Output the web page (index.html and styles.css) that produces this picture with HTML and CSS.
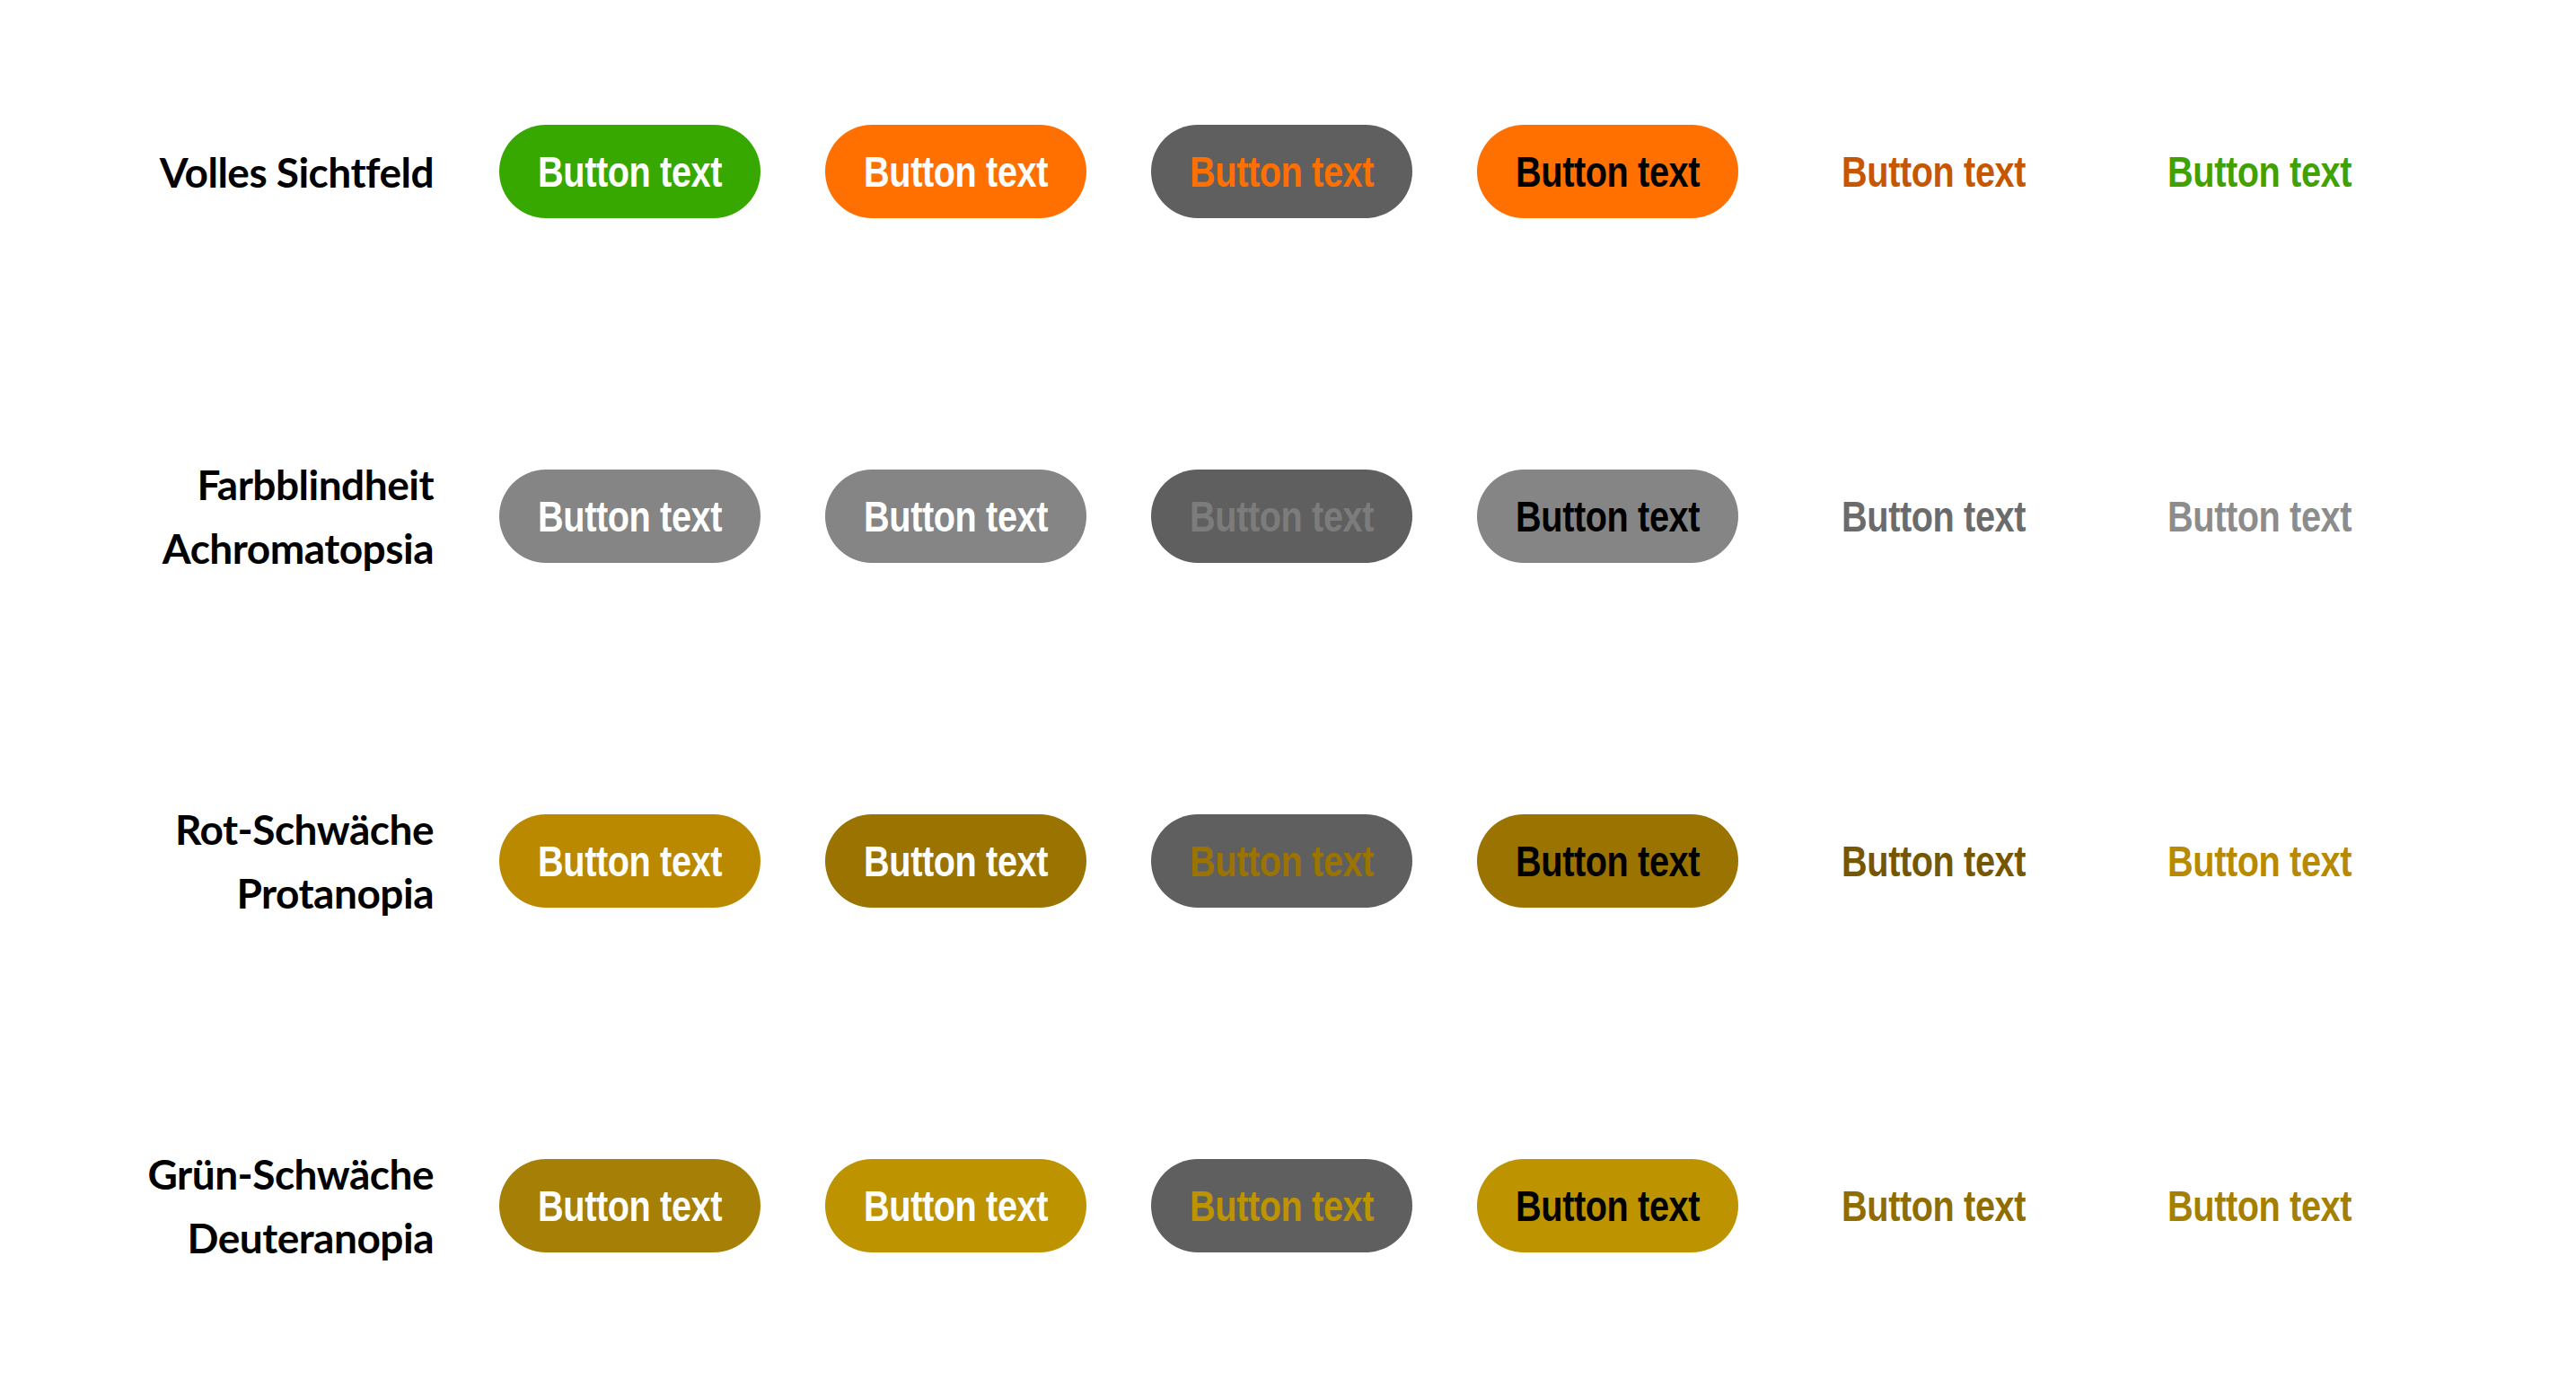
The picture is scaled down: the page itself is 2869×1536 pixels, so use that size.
FILE: index.html
```html
<!DOCTYPE html>
<html lang="de">
<head>
<meta charset="utf-8">
<title>Button Farbsimulation</title>
<link rel="stylesheet" href="styles.css">
</head>
<body>
<main class="board">
  <div class="label">Volles Sichtfeld</div>
  <div class="btn r1-b1"><span class="txt">Button text</span></div>
  <div class="btn r1-b2"><span class="txt">Button text</span></div>
  <div class="btn r1-b3"><span class="txt">Button text</span></div>
  <div class="btn r1-b4"><span class="txt">Button text</span></div>
  <div class="btn plain r1-t5"><span class="txt">Button text</span></div>
  <div class="btn plain r1-t6"><span class="txt">Button text</span></div>

  <div class="label">Farbblindheit<br>Achromatopsia</div>
  <div class="btn r2-b1"><span class="txt">Button text</span></div>
  <div class="btn r2-b2"><span class="txt">Button text</span></div>
  <div class="btn r2-b3"><span class="txt">Button text</span></div>
  <div class="btn r2-b4"><span class="txt">Button text</span></div>
  <div class="btn plain r2-t5"><span class="txt">Button text</span></div>
  <div class="btn plain r2-t6"><span class="txt">Button text</span></div>

  <div class="label">Rot-Schwäche<br>Protanopia</div>
  <div class="btn r3-b1"><span class="txt">Button text</span></div>
  <div class="btn r3-b2"><span class="txt">Button text</span></div>
  <div class="btn r3-b3"><span class="txt">Button text</span></div>
  <div class="btn r3-b4"><span class="txt">Button text</span></div>
  <div class="btn plain r3-t5"><span class="txt">Button text</span></div>
  <div class="btn plain r3-t6"><span class="txt">Button text</span></div>

  <div class="label">Grün-Schwäche<br>Deuteranopia</div>
  <div class="btn r4-b1"><span class="txt">Button text</span></div>
  <div class="btn r4-b2"><span class="txt">Button text</span></div>
  <div class="btn r4-b3"><span class="txt">Button text</span></div>
  <div class="btn r4-b4"><span class="txt">Button text</span></div>
  <div class="btn plain r4-t5"><span class="txt">Button text</span></div>
  <div class="btn plain r4-t6"><span class="txt">Button text</span></div>
</main>
</body>
</html>
```

FILE: styles.css
```css
html, body {
  margin: 0;
  padding: 0;
  background: #ffffff;
}

.board {
  display: grid;
  grid-template-columns: 484px repeat(6, 291px);
  grid-auto-rows: 104px;
  column-gap: 72px;
  row-gap: 280px;
  padding-top: 139px;
  padding-bottom: 141px;
}

.label {
  align-self: center;
  text-align: right;
  font-family: "Lato", "Noto Sans", sans-serif;
  font-weight: 700;
  font-size: 46px;
  line-height: 71px;
  letter-spacing: -0.5px;
  color: #000000;
  padding-right: 1px;
}

.btn {
  display: flex;
  align-items: center;
  justify-content: center;
  border-radius: 52px;
  font-family: "Liberation Sans", Arial, sans-serif;
  font-weight: 700;
  font-size: 49px;
  line-height: 1;
  color: #ffffff;
  white-space: nowrap;
}

.txt {
  display: inline-block;
  transform: scaleX(0.81);
  letter-spacing: -0.5px;
}

.plain { background: transparent; }

/* Row 1: full vision */
.r1-b1 { background: #37a800; }
.r1-b2 { background: #ff7000; }
.r1-b3 { background: #5f5f5f; color: #ff7000; }
.r1-b4 { background: #ff7000; color: #000000; }
.r1-t5 { color: #c65700; }
.r1-t6 { color: #40a100; }

/* Row 2: achromatopsia */
.r2-b1 { background: #858585; }
.r2-b2 { background: #858585; }
.r2-b3 { background: #5f5f5f; color: #7c7c7c; }
.r2-b4 { background: #858585; color: #000000; }
.r2-t5 { color: #6b6b6b; }
.r2-t6 { color: #8c8c8c; }

/* Row 3: protanopia */
.r3-b1 { background: #bb8900; }
.r3-b2 { background: #9b7300; }
.r3-b3 { background: #5f5f5f; color: #9b7300; }
.r3-b4 { background: #9b7300; color: #000000; }
.r3-t5 { color: #745700; }
.r3-t6 { color: #b88a00; }

/* Row 4: deuteranopia */
.r4-b1 { background: #a67f06; }
.r4-b2 { background: #bd9300; }
.r4-b3 { background: #5f5f5f; color: #bd9300; }
.r4-b4 { background: #bd9300; color: #000000; }
.r4-t5 { color: #8f6d00; }
.r4-t6 { color: #a47f00; }
```
